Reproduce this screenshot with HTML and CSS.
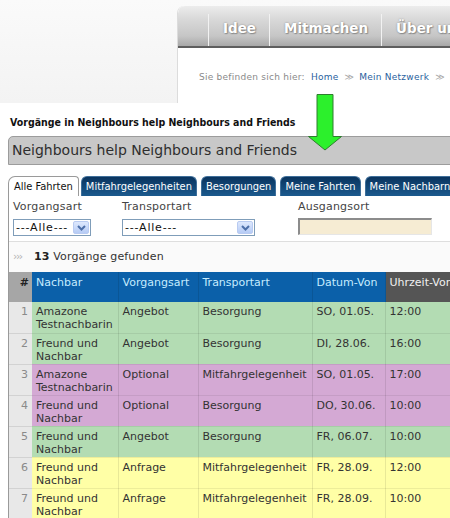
FILE: index.html
```html
<!DOCTYPE html>
<html lang="de">
<head>
<meta charset="utf-8">
<title>Vorgänge</title>
<link rel="stylesheet" href="styles.css">
</head>
<body>
<div class="site-head">
  <div class="panel">
    <nav class="mainnav">
      <span class="sep"></span><a class="nav-item">Idee</a><span class="sep"></span><a class="nav-item">Mitmachen</a><span class="sep"></span><a class="nav-item">Über uns</a>
    </nav>
    <div class="crumbs">
      <span class="crumb-label">Sie befinden sich hier:</span>
      <a class="crumb-link">Home</a><span class="raquo">≫</span><a class="crumb-link">Mein Netzwerk</a><span class="raquo">≫</span><a class="crumb-link">Mein Nachbar</a>
    </div>
  </div>
</div>

<div class="main">
  <h1 class="page-title">Vorgänge in Neighbours help Neighbours and Friends</h1>
  <div class="group-box">Neighbours help Neighbours and Friends</div>

  <div class="tabs">
    <span class="tab tab-active">Alle Fahrten</span>
    <span class="tab">Mitfahrgelegenheiten</span>
    <span class="tab">Besorgungen</span>
    <span class="tab">Meine Fahrten</span>
    <span class="tab">Meine Nachbarn</span>
  </div>

  <div class="tab-body">
    <div class="filters">
      <div class="filter f1">
        <label class="flabel">Vorgangsart</label>
        <div class="select sel-small"><span class="sel-text">---Alle---</span><span class="sel-btn"><svg width="9" height="6" viewBox="0 0 9 6"><path d="M1 1 L4.5 4.5 L8 1" fill="none" stroke="#4d6fa8" stroke-width="2"/></svg></span></div>
      </div>
      <div class="filter f2">
        <label class="flabel">Transportart</label>
        <div class="select sel-wide"><span class="sel-text">---Alle---</span><span class="sel-btn"><svg width="9" height="6" viewBox="0 0 9 6"><path d="M1 1 L4.5 4.5 L8 1" fill="none" stroke="#4d6fa8" stroke-width="2"/></svg></span></div>
      </div>
      <div class="filter f3">
        <label class="flabel">Ausgangsort</label>
        <div class="text-input"></div>
      </div>
    </div>

    <div class="found"><span class="chev">›››</span><b>13</b> Vorgänge gefunden</div>

    <table class="grid">
      <colgroup>
        <col class="c-num"><col class="c-nb"><col class="c-va"><col class="c-ta"><col class="c-dv"><col class="c-uv">
      </colgroup>
      <thead>
        <tr>
          <th class="th-num">#</th>
          <th>Nachbar</th>
          <th>Vorgangsart</th>
          <th>Transportart</th>
          <th>Datum-Von</th>
          <th class="th-dark">Uhrzeit-Von</th>
        </tr>
      </thead>
      <tbody>
        <tr class="r-green"><td class="num">1</td><td>Amazone Testnachbarin</td><td>Angebot</td><td>Besorgung</td><td>SO, 01.05.</td><td>12:00</td></tr>
        <tr class="r-green"><td class="num">2</td><td>Freund und Nachbar</td><td>Angebot</td><td>Besorgung</td><td>DI, 28.06.</td><td>16:00</td></tr>
        <tr class="r-purple"><td class="num">3</td><td>Amazone Testnachbarin</td><td>Optional</td><td>Mitfahrgelegenheit</td><td>SO, 01.05.</td><td>17:00</td></tr>
        <tr class="r-purple"><td class="num">4</td><td>Freund und Nachbar</td><td>Optional</td><td>Besorgung</td><td>DO, 30.06.</td><td>10:00</td></tr>
        <tr class="r-green"><td class="num">5</td><td>Freund und Nachbar</td><td>Angebot</td><td>Besorgung</td><td>FR, 06.07.</td><td>10:00</td></tr>
        <tr class="r-yellow"><td class="num">6</td><td>Freund und Nachbar</td><td>Anfrage</td><td>Mitfahrgelegenheit</td><td>FR, 28.09.</td><td>12:00</td></tr>
        <tr class="r-yellow"><td class="num">7</td><td>Freund und Nachbar</td><td>Anfrage</td><td>Mitfahrgelegenheit</td><td>FR, 28.09.</td><td>10:00</td></tr>
      </tbody>
    </table>
  </div>

  <svg class="arrow" width="40" height="62" viewBox="0 0 40 62">
    <polygon points="11,1.5 27,1.5 27,43.5 35.5,43.5 19,57 2.5,43.5 11,43.5" fill="#2cf02c" stroke="#2f7d2f" stroke-width="1"/>
  </svg>
</div>
</body>
</html>
```

FILE: styles.css
```css
html, body {
  margin: 0;
  padding: 0;
}
body {
  width: 450px;
  height: 518px;
  overflow: hidden;
  background: #ffffff;
  font-family: "DejaVu Sans", Verdana, sans-serif;
  color: #333;
  position: relative;
}

/* ---------- header screenshot ---------- */
.site-head {
  height: 103px;
  background: linear-gradient(#fafafa, #f3f3f3);
  padding-top: 6px;
  box-sizing: border-box;
  overflow: hidden;
}
.panel {
  margin-left: 177px;
  height: 97px;
  background: #fff;
  border-left: 1px solid #dcdcdc;
  border-top-left-radius: 7px;
  overflow: hidden;
}
.mainnav {
  height: 40px;
  display: flex;
  align-items: stretch;
  padding-left: 30px;
  background: linear-gradient(#ececec 0%, #dadada 30%, #c6c6c6 75%, #a8a8a8 100%);
  border-bottom: 2px solid #5e5e5e;
  border-top-left-radius: 7px;
  white-space: nowrap;
}
.sep {
  width: 1px;
  margin-top: 8px;
  background: #b4b4b4;
  border-right: 1px solid #f2f2f2;
}
.nav-item {
  padding: 0 13px 0 14px;
  font-family: "DejaVu Sans", Verdana, sans-serif;
  font-weight: bold;
  font-size: 13.5px;
  line-height: 44px;
  color: #fff;
  text-shadow: 0 0 2px rgba(0,0,0,0.35), 1px 1px 1px rgba(0,0,0,0.25);
}
.crumbs {
  margin-top: 23px;
  padding-left: 21px;
  font-size: 9px;
  letter-spacing: 0.25px;
  color: #8a8a8a;
  white-space: nowrap;
  line-height: 12px;
}
.crumb-label {
  margin-right: 3px;
}
.crumb-link {
  color: #2a5f9e;
}
.raquo {
  color: #a8a8a8;
  padding: 0 5px 0 6px;
}

/* ---------- main ---------- */
.main {
  padding-left: 8px;
}
.page-title {
  margin: 13px 0 7px 2px;
  font-family: "DejaVu Sans Condensed", "DejaVu Sans", sans-serif;
  font-weight: bold;
  font-size: 10.5px;
  line-height: 13px;
  color: #111;
  white-space: nowrap;
}
.group-box {
  width: 460px;
  height: 29px;
  box-sizing: border-box;
  background: #c8c8c8;
  border: 1px solid #9c9c9c;
  border-top-left-radius: 5px;
  padding-left: 3px;
  font-size: 14px;
  line-height: 27px;
  color: #2e2e2e;
  white-space: nowrap;
}

.tabs {
  margin-top: 11px;
  display: flex;
  gap: 4px;
  height: 20px;
  white-space: nowrap;
}
.tab {
  height: 20px;
  box-sizing: border-box;
  padding: 0 4px;
  border-radius: 6px 6px 0 0;
  background: linear-gradient(#0a345e, #1b5a8e);
  border: 1px solid #3f6f9a;
  border-bottom: none;
  color: #fff;
  font-family: "DejaVu Sans Condensed", "DejaVu Sans", sans-serif;
  font-size: 11px;
  line-height: 20px;
  flex-shrink: 0;
}
.tab-active {
  background: #fff;
  color: #111;
  border: 1px solid #9a9a9a;
  border-bottom: none;
  border-radius: 7px 4px 0 0;
  padding: 0 5px;
  margin-right: -2px;
}

.tab-body {
  border-left: 1px solid #9a9a9a;
}
.filters {
  display: grid;
  grid-template-columns: 109px 176px auto;
  padding: 4px 0 5px 4px;
  border-bottom: 1px solid #dedede;
}
.filter {
  display: flex;
  flex-direction: column;
  gap: 6px;
}
.flabel {
  font-size: 11px;
  letter-spacing: 0.2px;
  line-height: 13px;
  color: #444;
}
.select {
  display: flex;
  align-items: center;
  height: 17px;
  box-sizing: border-box;
  border: 1px solid #7f9db9;
  background: #fff;
  padding-left: 2px;
}
.sel-small { width: 78px; }
.sel-wide { width: 133px; }
.sel-text {
  flex: 1;
  font-size: 11px;
  letter-spacing: 0.8px;
  color: #111;
  line-height: 15px;
}
.sel-btn {
  width: 16px;
  height: 13px;
  margin-right: 1px;
  box-sizing: border-box;
  border: 1px solid #b9cbf1;
  border-radius: 2px;
  background: linear-gradient(#dde8fd, #b6cbf5);
  display: flex;
  align-items: center;
  justify-content: center;
}
.text-input {
  width: 134px;
  height: 17px;
  margin-top: -1px;
  box-sizing: border-box;
  background: #f6ecd3;
  border-top: 2px solid #8c8c8c;
  border-left: 2px solid #8c8c8c;
  border-right: 1px solid #e6e6e6;
  border-bottom: 1px solid #e6e6e6;
}

.found {
  height: 30px;
  line-height: 30px;
  padding-left: 4px;
  font-size: 11px;
  color: #333;
  letter-spacing: 0.15px;
  background: #fafafa;
  white-space: nowrap;
}
.found .chev {
  display: inline-block;
  width: 21px;
  font-size: 11px;
  color: #b4b4b4;
  letter-spacing: -1.5px;
}
.found b {
  color: #222;
}

/* ---------- table ---------- */
.grid {
  border-collapse: collapse;
  table-layout: fixed;
  width: 476px;
  font-size: 11px;
  color: #333;
}
.c-num { width: 23px; }
.c-nb { width: 86px; }
.c-va { width: 80px; }
.c-ta { width: 114px; }
.c-dv { width: 73px; }
.c-uv { width: 100px; }

.grid th {
  height: 30px;
  box-sizing: border-box;
  padding: 4px 4px 0;
  vertical-align: top;
  text-align: left;
  font-weight: normal;
  background: #0b60a9;
  color: #c6ecff;
  border-right: 1px solid #0a5696;
  white-space: nowrap;
  line-height: 13px;
}
.grid th.th-num {
  background: #a6a6a6;
  color: #222;
  font-weight: bold;
  text-align: right;
  padding-right: 3px;
  border-right: none;
}
.grid th.th-dark {
  background: #555;
  color: #f0f0f0;
}
.grid td {
  height: 31px;
  box-sizing: border-box;
  padding: 3px 4px 0;
  vertical-align: top;
  line-height: 13px;
  border-right: 1px solid rgba(0,0,0,0.09);
  border-bottom: 1px solid rgba(0,0,0,0.07);
  white-space: normal;
}
.grid td.num {
  background: #e8e8e8;
  color: #8a8a8a;
  text-align: right;
  padding-right: 4px;
  border-right: none;
  border-bottom: 1px solid #d2d2d2;
}
.r-green td { background: #b3dcb3; }
.r-purple td { background: #d4a9d4; }
.r-yellow td { background: #ffffa6; }
.r-green td.num, .r-purple td.num, .r-yellow td.num { background: #e8e8e8; }

/* annotation arrow overlay */
.arrow {
  position: absolute;
  left: 306px;
  top: 93px;
}
```
